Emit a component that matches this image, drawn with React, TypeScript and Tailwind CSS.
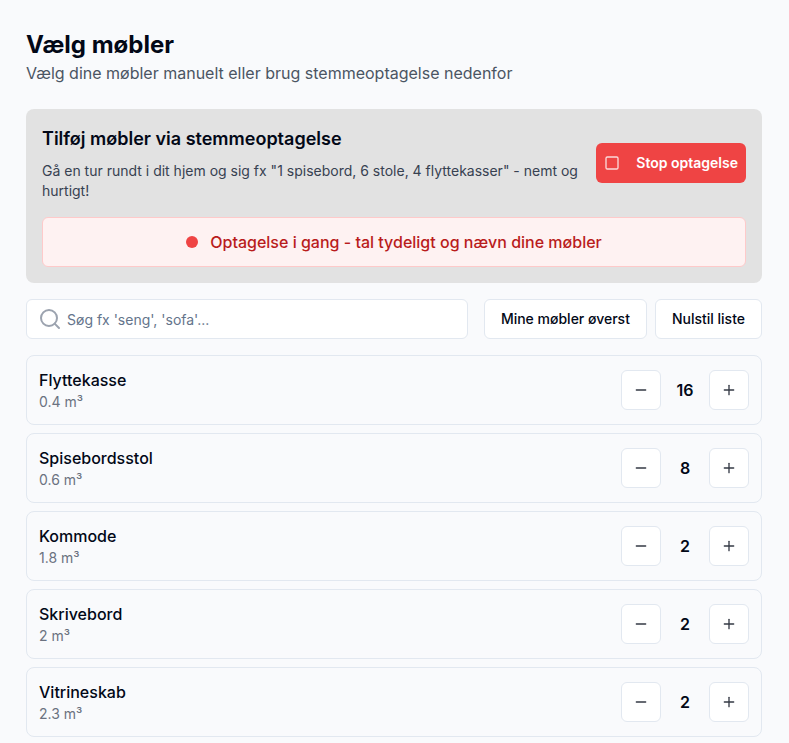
import { useState } from "react";
import { Minus, Plus, Search, Square } from "lucide-react";

interface FurnitureItem {
  id: string;
  name: string;
  volume: string;
  quantity: number;
}

const initialItems: FurnitureItem[] = [
  { id: "flyttekasse", name: "Flyttekasse", volume: "0.4", quantity: 16 },
  { id: "spisebordsstol", name: "Spisebordsstol", volume: "0.6", quantity: 8 },
  { id: "kommode", name: "Kommode", volume: "1.8", quantity: 2 },
  { id: "skrivebord", name: "Skrivebord", volume: "2", quantity: 2 },
  { id: "vitrineskab", name: "Vitrineskab", volume: "2.3", quantity: 2 },
];

interface FurnitureRowProps {
  item: FurnitureItem;
  onChange: (id: string, delta: number) => void;
}

function FurnitureRow({ item, onChange }: FurnitureRowProps) {
  return (
    <li className="flex items-center justify-between rounded-lg border border-[#e2e8f0] p-3">
      <div>
        <h3 className="text-base font-medium">{item.name}</h3>
        <p className="text-sm text-[#6b7280]">{item.volume} m³</p>
      </div>
      <div className="flex items-center gap-2">
        <button
          type="button"
          onClick={() => onChange(item.id, -1)}
          className="flex h-10 w-10 items-center justify-center rounded-md border border-[#e2e8f0] bg-white"
          aria-label="Fjern en"
        >
          <Minus className="h-4 w-4 opacity-80" />
        </button>
        <span className="w-8 text-center text-base font-semibold">{item.quantity}</span>
        <button
          type="button"
          onClick={() => onChange(item.id, 1)}
          className="flex h-10 w-10 items-center justify-center rounded-md border border-[#e2e8f0] bg-white"
          aria-label="Tilføj en"
        >
          <Plus className="h-4 w-4 opacity-80" />
        </button>
      </div>
    </li>
  );
}

export default function App() {
  const [items, setItems] = useState(initialItems);
  const [search, setSearch] = useState("");
  const [recording, setRecording] = useState(true);

  const handleChange = (id: string, delta: number) => {
    setItems((prev) =>
      prev.map((item) =>
        item.id === id ? { ...item, quantity: Math.max(0, item.quantity + delta) } : item
      )
    );
  };

  const handleSort = () => {
    setItems((prev) => [...prev].sort((a, b) => b.quantity - a.quantity));
  };

  const handleReset = () => {
    setItems((prev) => prev.map((item) => ({ ...item, quantity: 0 })));
  };

  const visibleItems = items.filter((item) =>
    item.name.toLowerCase().includes(search.toLowerCase())
  );

  return (
    <main className="min-h-screen bg-[#f9fafc] pt-[29px] pr-[27px] pb-1 pl-[26px] font-['Inter','Liberation_Sans',sans-serif] text-[#020817]">
      {/* Header */}
      <header className="mb-6">
        <h1 className="text-2xl font-bold">Vælg møbler</h1>
        <p className="text-base text-[#4b5563]">
          Vælg dine møbler manuelt eller brug stemmeoptagelse nedenfor
        </p>
      </header>

      {/* Voice recording */}
      <section className="mb-4 rounded-lg bg-[#e2e2e2] p-4">
        <div className="flex items-center justify-between gap-4">
          <div>
            <h2 className="mb-2 text-lg font-semibold">Tilføj møbler via stemmeoptagelse</h2>
            <p className="text-sm text-[#374151]">
              Gå en tur rundt i dit hjem og sig fx "1 spisebord, 6 stole, 4 flyttekasser" - nemt og
              hurtigt!
            </p>
          </div>
          <button
            type="button"
            onClick={() => setRecording(!recording)}
            className="flex h-10 shrink-0 items-center gap-4 rounded-md bg-[#ef4444] px-2 text-sm font-semibold text-white"
          >
            <Square className="h-4 w-4 opacity-80" />
            {recording ? "Stop optagelse" : "Start optagelse"}
          </button>
        </div>
        {recording && (
          <div className="mt-4 flex items-center justify-center gap-3 rounded-md border border-[#fecaca] bg-[#fef2f2] p-3">
            <span className="h-3 w-3 rounded-full bg-[#ef4444]" />
            <span className="text-base font-medium text-[#b91c1c]">
              Optagelse i gang - tal tydeligt og nævn dine møbler
            </span>
          </div>
        )}
      </section>

      {/* Search and actions */}
      <div className="mb-4 flex gap-4">
        <div className="relative flex-1">
          <Search className="absolute top-2 left-3 h-6 w-6 text-[#9ca3af]" />
          <input
            type="text"
            value={search}
            onChange={(e) => setSearch(e.target.value)}
            placeholder="Søg fx 'seng', 'sofa'..."
            aria-label="Søg"
            className="h-10 w-full rounded-md border border-[#e2e8f0] bg-white pr-3 pl-10 text-sm placeholder:text-[#64748b]"
          />
        </div>
        <div className="flex gap-2">
          <button
            type="button"
            onClick={handleSort}
            className="h-10 rounded-md border border-[#e2e8f0] bg-white px-4 text-sm font-medium"
          >
            Mine møbler øverst
          </button>
          <button
            type="button"
            onClick={handleReset}
            className="h-10 rounded-md border border-[#e2e8f0] bg-white px-4 text-sm font-medium"
          >
            Nulstil liste
          </button>
        </div>
      </div>

      {/* Furniture list */}
      <ul className="space-y-2">
        {visibleItems.map((item) => (
          <FurnitureRow key={item.id} item={item} onChange={handleChange} />
        ))}
      </ul>
    </main>
  );
}
